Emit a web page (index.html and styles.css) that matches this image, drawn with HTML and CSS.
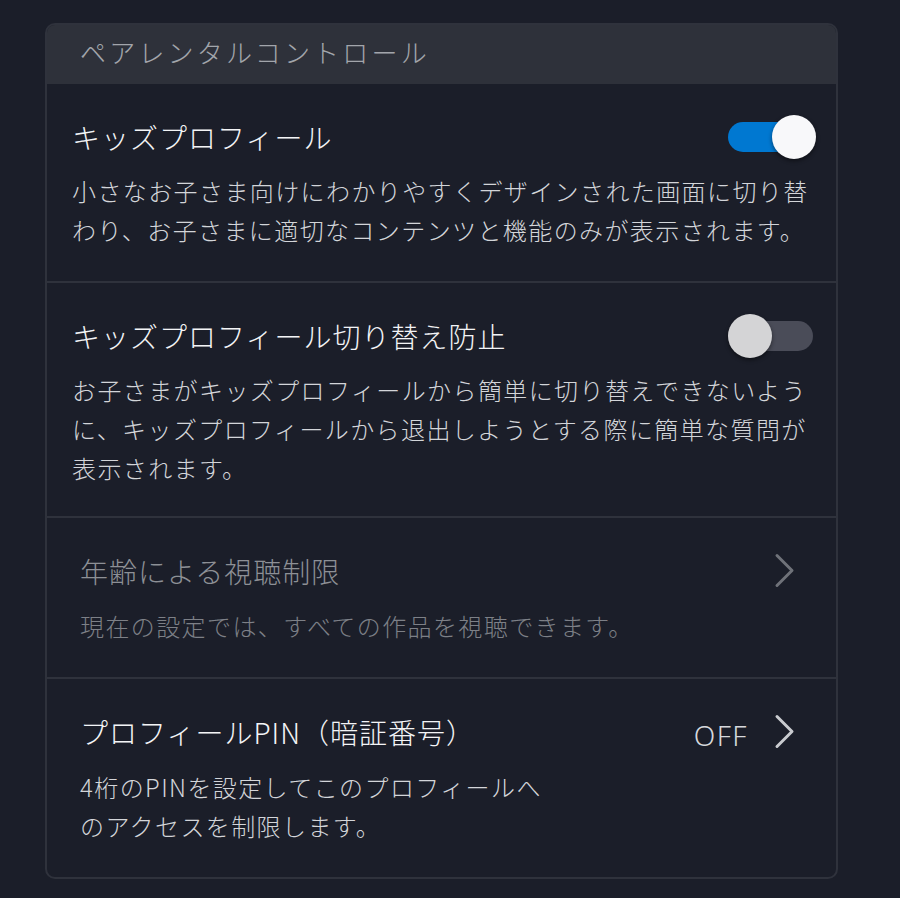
FILE: index.html
```html
<!DOCTYPE html>
<html lang="ja">
<head>
<meta charset="utf-8">
<link rel="stylesheet" href="styles.css">
</head>
<body>
<div class="card">
  <div class="card-header">ペアレンタルコントロール</div>

  <div class="section">
    <div class="row">
      <div class="title">キッズプロフィール</div>
      <div class="toggle on"><span class="knob"></span></div>
    </div>
    <div class="desc wide">小さなお子さま向けにわかりやすくデザインされた画面に切り替わり、お子さまに適切なコンテンツと機能のみが表示されます。</div>
  </div>

  <div class="section sec2">
    <div class="row">
      <div class="title">キッズプロフィール切り替え防止</div>
      <div class="toggle"><span class="knob"></span></div>
    </div>
    <div class="desc wide">お子さまがキッズプロフィールから簡単に切り替えできないように、キッズプロフィールから退出しようとする際に簡単な質問が表示されます。</div>
  </div>

  <div class="section link dim">
    <div class="row">
      <div class="title">年齢による視聴制限</div>
      <div class="right">
        <svg class="chev" width="22" height="36" viewBox="0 0 22 36"><path d="M3 2.5 L18 17.5 L3 32.5" fill="none" stroke="currentColor" stroke-width="3" stroke-linecap="round" stroke-linejoin="round"/></svg>
      </div>
    </div>
    <div class="desc">現在の設定では、すべての作品を視聴できます。</div>
  </div>

  <div class="section link last">
    <div class="row">
      <div class="title">プロフィールPIN（暗証番号）</div>
      <div class="right">
        <span class="value">OFF</span>
        <svg class="chev" width="22" height="36" viewBox="0 0 22 36"><path d="M3 2.5 L18 17.5 L3 32.5" fill="none" stroke="currentColor" stroke-width="3" stroke-linecap="round" stroke-linejoin="round"/></svg>
      </div>
    </div>
    <div class="desc narrow">4桁のPINを設定してこのプロフィールへのアクセスを制限します。</div>
  </div>
</div>
</body>
</html>
```

FILE: styles.css
```css
html, body {
  margin: 0;
  padding: 0;
  background: #1b1e29;
}
body {
  font-family: "Noto Sans CJK JP", "Noto Sans", sans-serif;
  font-weight: 300;
  padding-top: 23px;
  padding-left: 45px;
  height: 898px;
  box-sizing: border-box;
}
.card {
  width: 793px;
  box-sizing: border-box;
  border: 2px solid #2f323c;
  border-radius: 10px;
  overflow: hidden;
  background: #1b1e29;
}
.card-header {
  height: 59px;
  background: #2e313a;
  color: #a2a5ab;
  font-size: 26px;
  letter-spacing: 3.2px;
  line-height: 54px;
  padding-left: 33px;
}
.section {
  padding: 33px 23px 32px 25px;
  border-top: 2px solid #2f323c;
}
.card-header + .section {
  border-top: none;
}
.sec2 {
  padding-bottom: 29px;
}
.row {
  display: flex;
  align-items: center;
  justify-content: space-between;
  height: 40px;
}
.title {
  color: #f3f4f6;
  font-size: 28px;
  letter-spacing: 1px;
  line-height: 40px;
  white-space: nowrap;
}
.desc {
  margin-top: 14px;
  color: #d3d5d9;
  font-size: 24px;
  letter-spacing: 1.4px;
  line-height: 39px;
}
.wide {
  width: 748px;
}
.narrow {
  width: 476px;
}
.toggle {
  position: relative;
  width: 85px;
  height: 30px;
  border-radius: 15px;
  background: #4a4c58;
  flex: none;
}
.toggle.on {
  background: #0078d1;
}
.knob {
  position: absolute;
  top: -7px;
  left: 0;
  width: 44px;
  height: 44px;
  border-radius: 50%;
  background: #d4d4d6;
  box-shadow: 0 2px 4px rgba(0,0,0,0.45);
}
.toggle.on .knob {
  left: 44px;
  background: #f8f8fa;
}
.link {
  padding: 33px 40px 32px 33px;
}
.link .desc {
  margin-top: 15px;
}
.last {
  padding-bottom: 32px;
}
.right {
  display: flex;
  align-items: center;
  gap: 26px;
  color: #c9cbcf;
}
.value {
  font-family: "Noto Sans", sans-serif;
  font-size: 28px;
  letter-spacing: 1.5px;
  color: #d6d8dc;
  position: relative;
  top: 3px;
}
.chev {
  display: block;
}
.dim .title {
  color: #8d9096;
}
.dim .desc {
  color: #7d8087;
}
.dim .right {
  color: #6f7279;
}
```
